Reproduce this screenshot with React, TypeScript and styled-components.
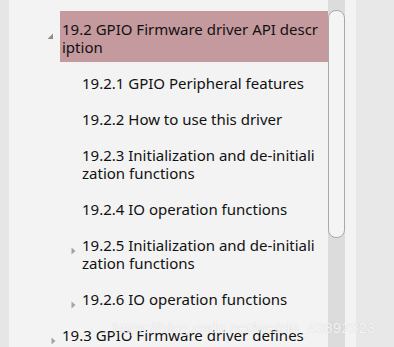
import React from 'react';
import styled, { createGlobalStyle } from 'styled-components';

const GlobalStyle = createGlobalStyle`
  html, body {
    margin: 0;
    padding: 0;
    background: #e8e8e8;
  }
  * { box-sizing: border-box; }
`;

const Frame = styled.div`
  display: flex;
  width: 394px;
  height: 347px;
  overflow: hidden;
  position: relative;
  font-family: 'Noto Sans', 'Open Sans', sans-serif;
`;

const Edge = styled.div`
  width: 9px;
  background: #e6e6e6;
`;

const Panel = styled.div`
  width: 319px;
  background: #f3f3f3;
  overflow: hidden;
`;

const Tree = styled.ul`
  list-style: none;
  margin: -25px 0 0;
  padding: 0;
`;

const Row = styled.li<{ $level: number }>`
  display: flex;
  align-items: flex-start;
  padding-left: ${p => 17 + (p.$level - 2) * 20}px;
`;

const Toggle = styled.span`
  width: 34px;
  flex: none;
  height: 18px;
  margin-top: 15px;
  display: flex;
  align-items: center;
  justify-content: flex-end;
`;

const Label = styled.span<{ $selected?: boolean }>`
  flex: 1;
  padding: 9px 8px ${p => (p.$selected ? '6px' : '9px')} 2px;
  margin-bottom: ${p => (p.$selected ? '3px' : '0')};
  font-size: 15px;
  line-height: 18px;
  color: #111;
  word-break: break-all;
  background: ${p => (p.$selected ? '#c59a9e' : 'transparent')};
`;

const Track = styled.div`
  width: 17px;
  background: #dcdcdc;
  padding-top: 10px;
`;

const Thumb = styled.div`
  height: 228px;
  background: #f4f4f4;
  border: 1px solid #a9a9a9;
  border-radius: 8px;
`;

const Gutter = styled.div`
  width: 11px;
  background: #f3f3f3;
`;

const Side = styled.div`
  flex: 1;
  background: #e8e8e8;
`;

const Watermark = styled.div`
  position: absolute;
  left: 113px;
  top: 319px;
  font-family: 'Liberation Sans', Arial, sans-serif;
  font-size: 15px;
  letter-spacing: 0.2px;
  color: rgba(255, 255, 255, 0.85);
  text-shadow: 0 0 1px rgba(120, 120, 120, 0.35);
  pointer-events: none;
`;

type State = 'open' | 'closed' | 'none';

const Arrow = ({ state }: { state: State }) => {
  if (state === 'open') {
    return (
      <svg width="7" height="7" viewBox="0 0 7 7" style={{ marginTop: 2, marginRight: 6 }}>
        <path d="M6 0.5 L6 6 L0.5 6 Z" fill="#8c8c8c" />
      </svg>
    );
  }
  if (state === 'closed') {
    return (
      <svg width="5" height="8" viewBox="0 0 5 8" style={{ marginRight: 4 }}>
        <path d="M0.5 0.5 L4.5 4 L0.5 7.5 Z" fill="#a3a3a3" />
      </svg>
    );
  }
  return null;
};

const items: { level: number; text: string; state: State; selected?: boolean }[] = [
  { level: 2, text: 'structures', state: 'none' },
  { level: 2, text: '19.2 GPIO Firmware driver API description', state: 'open', selected: true },
  { level: 3, text: '19.2.1 GPIO Peripheral features', state: 'none' },
  { level: 3, text: '19.2.2 How to use this driver', state: 'none' },
  { level: 3, text: '19.2.3 Initialization and de-initialization functions', state: 'none' },
  { level: 3, text: '19.2.4 IO operation functions', state: 'none' },
  { level: 3, text: '19.2.5 Initialization and de-initialization functions', state: 'closed' },
  { level: 3, text: '19.2.6 IO operation functions', state: 'closed' },
  { level: 2, text: '19.3 GPIO Firmware driver defines', state: 'closed' },
];

const App = () => {
  return (
    <>
      <GlobalStyle />
      <Frame>
        <Edge />
        <Panel>
          <Tree>
            {items.map(item => (
              <Row key={item.text} $level={item.level}>
                <Toggle>
                  <Arrow state={item.state} />
                </Toggle>
                <Label $selected={item.selected}>{item.text}</Label>
              </Row>
            ))}
          </Tree>
        </Panel>
        <Track>
          <Thumb />
        </Track>
        <Gutter />
        <Side />
        <Watermark>https://blog.csdn.net/weixin_43892323</Watermark>
      </Frame>
    </>
  );
};

export default App;
